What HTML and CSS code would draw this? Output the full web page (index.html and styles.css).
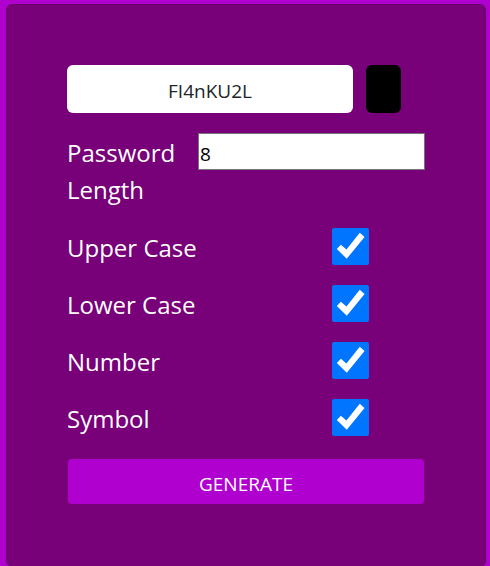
FILE: index.html
```html
<!DOCTYPE html>
<html lang="en">
<head>
<meta charset="utf-8">
<meta name="viewport" content="width=device-width, initial-scale=1">
<title>Password Generator</title>
<link rel="stylesheet" href="styles.css">
</head>
<body>
<main class="card">
  <div class="result">
    <output class="password">FI4nKU2L</output>
    <button class="copy" type="button" aria-label="Copy"></button>
  </div>
  <form class="options">
    <div class="row length-row">
      <label class="length-label" for="length">Password Length</label>
      <input class="length" id="length" type="number" value="8">
    </div>
    <div class="row">
      <label for="upper">Upper Case</label>
      <input class="check" id="upper" type="checkbox" checked>
    </div>
    <div class="row">
      <label for="lower">Lower Case</label>
      <input class="check" id="lower" type="checkbox" checked>
    </div>
    <div class="row">
      <label for="number">Number</label>
      <input class="check" id="number" type="checkbox" checked>
    </div>
    <div class="row">
      <label for="symbol">Symbol</label>
      <input class="check" id="symbol" type="checkbox" checked>
    </div>
    <button class="generate" type="button">GENERATE</button>
  </form>
</main>
</body>
</html>
```
FILE: styles.css
```css
* {
  box-sizing: border-box;
}

body {
  margin: 0;
  padding: 4px 4px 0 6px;
  background: #b000d0;
  font-family: "Segoe UI", "Open Sans", "Noto Sans", sans-serif;
}

.card {
  padding: 60px 60px 62px;
  border: 1px solid #680068;
  border-radius: 6px;
  background: #780078;
  color: #fff;
}

.result {
  display: flex;
  gap: 13px;
  margin-bottom: 20px;
  padding-right: 24px;
}

.password {
  flex: 1;
  height: 48px;
  border-radius: 6px;
  background: #fff;
  color: #212529;
  font-size: 19px;
  line-height: 52px;
  text-align: center;
}

.copy {
  width: 35px;
  height: 48px;
  padding: 0;
  border: 0;
  border-radius: 6px;
  background: #000;
}

.options {
  display: flex;
  flex-direction: column;
  gap: 20px;
  font-size: 24px;
}

.row {
  display: flex;
  justify-content: space-between;
  align-items: flex-start;
  line-height: 37px;
}

.length-row {
  padding-bottom: 1px;
}

.row label {
  padding-top: 1px;
  margin-bottom: -1px;
}

.length-label {
  width: 120px;
}

.length {
  width: 227px;
  height: 37px;
  padding: 4px 1px 0;
  border: 1px solid #767676;
  background: #fff;
  color: #000;
  font-family: inherit;
  font-size: 19px;
}

.check {
  appearance: none;
  width: 37px;
  height: 37px;
  margin: 0 56px 0 0;
  border-radius: 2px;
  background: #0075ff;
}

.check:not(:checked) {
  background: #fff;
}

.check:checked::before {
  content: "";
  display: block;
  height: 100%;
  background: #fff;
  clip-path: polygon(13% 57%, 24% 45%, 39% 58%, 75% 13%, 88% 24%, 40% 83%);
}

.generate {
  height: 45px;
  margin: 3px 1px 0;
  padding: 4px 0 0;
  border: 0;
  border-radius: 4px;
  background: #b000d0;
  color: #fff;
  font-family: inherit;
  font-size: 19px;
}
```
